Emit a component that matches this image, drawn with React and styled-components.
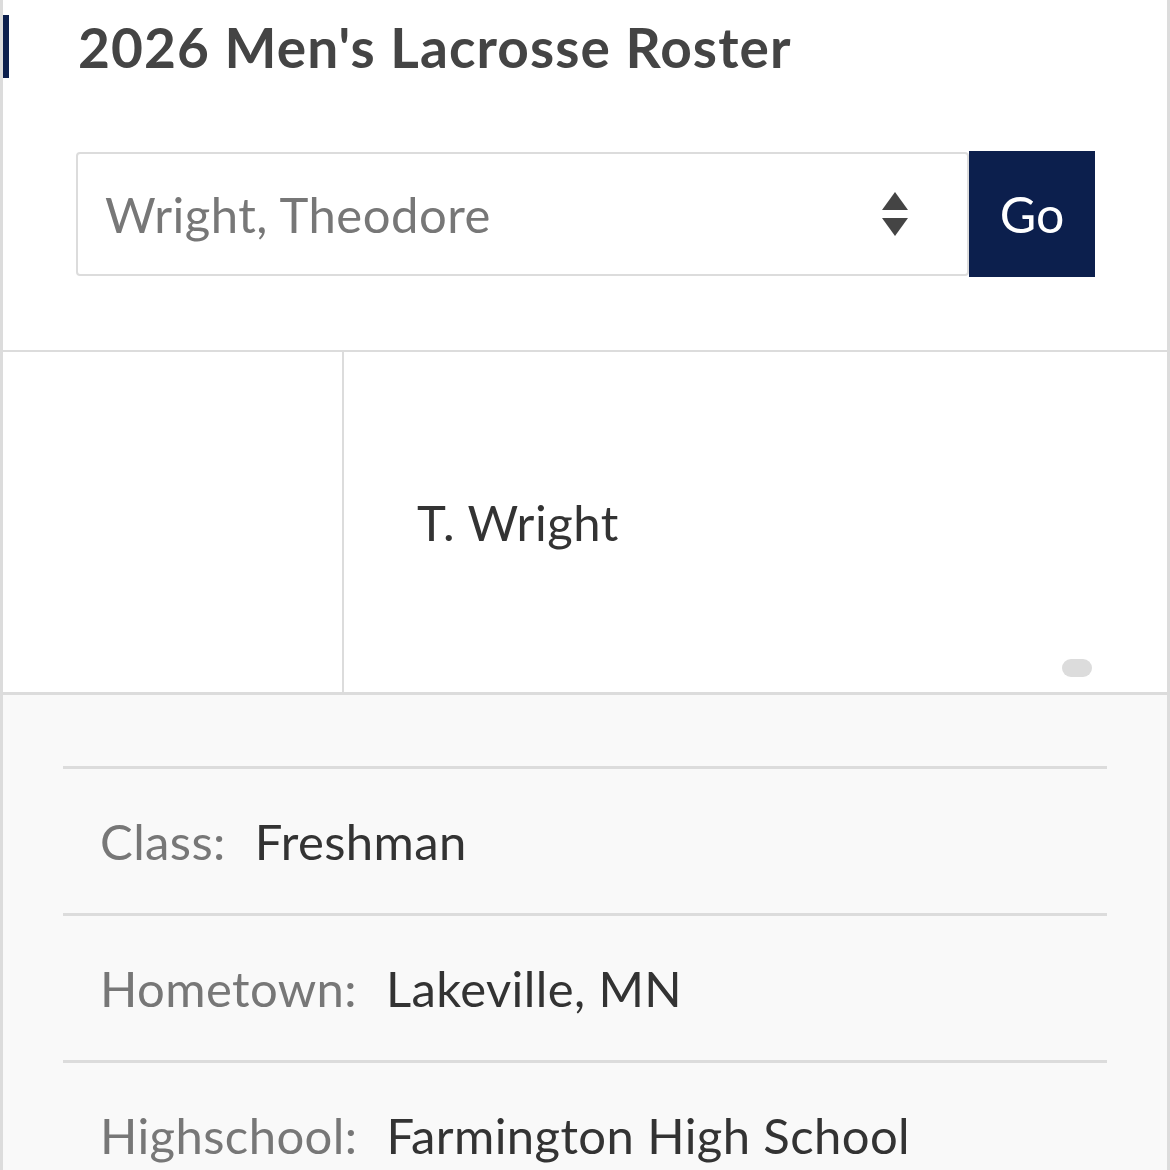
import React from 'react';
import styled, { createGlobalStyle } from 'styled-components';

const GlobalStyle = createGlobalStyle`
  html, body {
    margin: 0;
    padding: 0;
    background: #fff;
    font-family: Lato, "Open Sans", sans-serif;
  }
`;

const Page = styled.div`
  width: 1170px;
  box-sizing: border-box;
  border-left: 3px solid #dcdcdc;
  border-right: 3px solid #dcdcdc;
  background: #fff;
  min-height: 1170px;
`;

const Header = styled.div`
  border-bottom: 2px solid #dcdcdc;
  padding: 15px 0 73px;
`;

const Title = styled.h1`
  margin: 0;
  height: 63px;
  border-left: 6px solid #0c1f4d;
  padding-left: 69px;
  display: flex;
  align-items: center;
  font-size: 55px;
  font-weight: 700;
  color: #444;
  letter-spacing: 1.1px;
`;

const Form = styled.div`
  display: flex;
  margin: 73px 72px 0 73px;
  height: 126px;
`;

const Select = styled.div`
  flex: 1;
  box-sizing: border-box;
  border: 2px solid #dcdcdc;
  border-radius: 4px;
  display: flex;
  align-items: center;
  justify-content: space-between;
  padding: 0 58px 0 27px;
  font-size: 49px;
  letter-spacing: 0.5px;
  color: #777;
  margin: 1px 0;
`;

const Arrows = styled.svg`
  width: 28px;
  height: 44px;
`;

const GoButton = styled.button`
  width: 126px;
  border: none;
  background: #0c1f4d;
  color: #fff;
  font-family: inherit;
  font-size: 50px;
  padding: 0;
`;

const PlayerRow = styled.div`
  display: grid;
  grid-template-columns: 341px 1fr;
  height: 340px;
  border-bottom: 3px solid #dcdcdc;
`;

const Photo = styled.div`
  border-right: 2px solid #dcdcdc;
`;

const NameCell = styled.div`
  position: relative;
  display: flex;
  align-items: center;
  padding-left: 73px;
  font-size: 49px;
  letter-spacing: 0.5px;
  color: #333;
`;

const Pill = styled.span`
  position: absolute;
  right: 75px;
  bottom: 15px;
  width: 30px;
  height: 18px;
  border-radius: 9px;
  background: #dcdcdc;
`;

const Bio = styled.ul`
  list-style: none;
  margin: 0;
  padding: 71px 60px 0;
  background: #f9f9f9;
  min-height: 480px;
`;

const BioItem = styled.li`
  border-top: 3px solid #dcdcdc;
  height: 144px;
  display: flex;
  align-items: center;
  padding-left: 37px;
  font-size: 49px;
  letter-spacing: 0.4px;
`;

const Label = styled.span`
  color: #777;
  margin-right: 29px;
`;

const Value = styled.span`
  color: #333;
`;

const bio = [
  ['Class:', 'Freshman'],
  ['Hometown:', 'Lakeville, MN'],
  ['Highschool:', 'Farmington High School'],
];

export default function App() {
  return (
    <>
      <GlobalStyle />
      <Page>
        <Header>
          <Title>2026 Men's Lacrosse Roster</Title>
          <Form>
            <Select>
              <span>Wright, Theodore</span>
              <Arrows viewBox="0 0 28 44">
                <path d="M14 0 L27 18 L1 18 Z" fill="#444" />
                <path d="M1 26 L27 26 L14 44 Z" fill="#444" />
              </Arrows>
            </Select>
            <GoButton>Go</GoButton>
          </Form>
        </Header>
        <PlayerRow>
          <Photo />
          <NameCell>
            T. Wright
            <Pill />
          </NameCell>
        </PlayerRow>
        <Bio>
          {bio.map(([k, v]) => (
            <BioItem key={k}>
              <Label>{k}</Label>
              <Value>{v}</Value>
            </BioItem>
          ))}
        </Bio>
      </Page>
    </>
  );
}
